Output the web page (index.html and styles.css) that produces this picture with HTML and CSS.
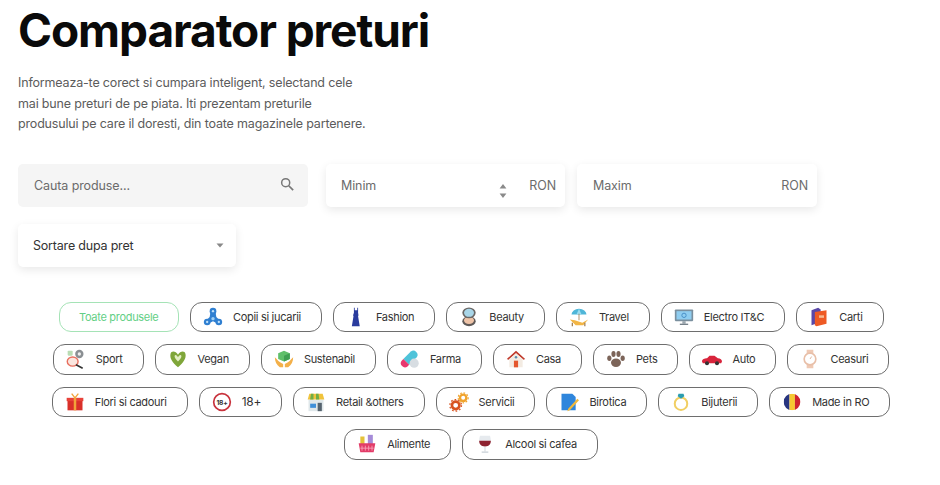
FILE: index.html
```html
<!DOCTYPE html>
<html lang="ro">
<head>
<meta charset="utf-8">
<title>Comparator preturi</title>
<link rel="stylesheet" href="styles.css">
</head>
<body>
<main class="page">
  <h1 class="title">Comparator preturi</h1>
  <p class="intro">Informeaza-te corect si cumpara inteligent, selectand cele<br>mai bune preturi de pe piata. Iti prezentam preturile<br>produsului pe care il doresti, din toate magazinele partenere.</p>

  <section class="filters">
    <div class="field field-search">
      <span class="ph">Cauta produse...</span>
      <svg class="search-ico" viewBox="0 0 16 16" width="14" height="14"><circle cx="6.500" cy="6.500" r="4.600" fill="none" stroke="#777" stroke-width="1.700"/><path d="M10 10l5 5" stroke="#777" stroke-width="2"/></svg>
    </div>
    <div class="field field-min">
      <span class="ph">Minim</span>
      <span class="right-group">
        <svg class="spin" viewBox="0 0 8 14" width="8" height="14"><path d="M4 0l3.400 4.500H.6z M4 14L.6 9.500h6.800z" fill="#8a8a8a"/></svg>
        <span class="ph">RON</span>
      </span>
    </div>
    <div class="field field-max">
      <span class="ph">Maxim</span>
      <span class="ph">RON</span>
    </div>
    <div class="field field-sort">
      <span class="sort-label">Sortare dupa pret</span>
      <svg viewBox="0 0 8 5" width="8" height="5"><path d="M.5.5h7L4 4.500z" fill="#888"/></svg>
    </div>
  </section>

  <section class="pills">
    <a class="pill pill-active">Toate produsele</a>
    <a class="pill"><svg class="ico" viewBox="0 0 24 24"><circle cx="12" cy="5" r="4" fill="#2f7fd1"/><circle cx="5" cy="18" r="4" fill="#2f7fd1"/><circle cx="19" cy="18" r="4" fill="#2f7fd1"/><path d="M9 6h6l1 6 4 4-2 4-6-3-6 3-2-4 4-4z" fill="#2f7fd1"/><circle cx="12" cy="14" r="2" fill="#9fd0f5"/><circle cx="12" cy="5" r="1.400" fill="#bfe0fa"/><circle cx="5" cy="18" r="1.400" fill="#bfe0fa"/><circle cx="19" cy="18" r="1.400" fill="#bfe0fa"/></svg>Copii si jucarii</a>
    <a class="pill"><svg class="ico" viewBox="0 0 24 24"><path d="M9.500 1h1v3h3V1h1v6l.5 3-.5 1 2 12H7l2-12-.5-1 1-3z" fill="#2a3c9e"/></svg>Fashion</a>
    <a class="pill"><svg class="ico" viewBox="0 0 24 24"><ellipse cx="12" cy="17" rx="8" ry="6" fill="#5f5a58"/><ellipse cx="12" cy="16" rx="6" ry="4.400" fill="#efc4a8"/><ellipse cx="12" cy="7" rx="8" ry="6.500" fill="#6b6765"/><ellipse cx="12" cy="7" rx="6" ry="4.800" fill="#a9d6e8"/></svg>Beauty</a>
    <a class="pill"><svg class="ico" viewBox="0 0 24 24"><path d="M3 9a9 7 0 0 1 18 0z" fill="#4fb6d8"/><path d="M9 9l3-7 3 7z" fill="#9adcf0"/><path d="M11.500 8h1v8h-1z" fill="#a07d52"/><path d="M1 15l6 1 9 3 7-4-6 7H8z" fill="#f2b544"/><path d="M4 19v4M19 19v4" stroke="#a07d52" stroke-width="1.500"/></svg>Travel</a>
    <a class="pill"><svg class="ico" viewBox="0 0 24 24"><rect x="1" y="3" width="22" height="14" rx="1" fill="#7a8f9e"/><rect x="3" y="5" width="18" height="10" fill="#8fcdf0"/><circle cx="12" cy="10" r="2.600" fill="none" stroke="#3c86c0" stroke-width="1"/><rect x="10" y="17" width="4" height="3" fill="#9aa6ae"/><rect x="7" y="20" width="10" height="1.500" fill="#6b7780"/></svg>Electro IT&amp;C</a>
    <a class="pill"><svg class="ico" viewBox="0 0 24 24"><path d="M3 4l8-3 3 2v3H8v14l-5 2z" fill="#5a48a8"/><path d="M7 6l14-2v16L9 23l-2-1z" fill="#ee5a24"/><rect x="12" y="10" width="6" height="3" fill="#f7b98f"/></svg>Carti</a>

    <a class="pill"><svg class="ico" viewBox="0 0 24 24"><circle cx="16" cy="6" r="5" fill="#8a8f93"/><circle cx="16" cy="6" r="2" fill="#eee"/><rect x="2" y="2" width="6" height="6" rx="1" fill="#b9dcb4"/><ellipse cx="8" cy="15" rx="6.500" ry="5.500" fill="#fbe6df" stroke="#e8705f" stroke-width="1.700"/><path d="M12 19l8 4" stroke="#333" stroke-width="2"/></svg>Sport</a>
    <a class="pill"><svg class="ico" viewBox="0 0 24 24"><path d="M12 22C5 16 2 11 3 6c1-4 6-4 9 1 3-5 8-5 9-1 1 5-2 10-9 16z" fill="#7fa63a"/><path d="M12 15C9 12 7.500 10 8 8c.5-1.500 2.500-1 4 2 1.500-3 3.500-3.500 4-2 .5 2-1 4-4 7z" fill="#e3efc4"/></svg>Vegan</a>
    <a class="pill"><svg class="ico" viewBox="0 0 24 24"><path d="M12 2l7 3v7l-7 3-7-3V5z" fill="#5fbf6a"/><path d="M12 8l7-3v7l-7 3z" fill="#3f9f52"/><path d="M1 10c3 3 5 6 10 8v4H7C3 19 1 15 1 10z" fill="#f3b04a"/><path d="M23 10c-3 3-5 6-10 8v4h4c4-3 6-7 6-12z" fill="#f3b04a"/></svg>Sustenabil</a>
    <a class="pill"><svg class="ico" viewBox="0 0 24 24"><path d="M4 12L13 3a5 5 0 0 1 7 7l-9 9z" fill="#4fc3d9"/><path d="M4 12l7 7-2 2a5 5 0 0 1-7-7z" fill="#e8386f"/><circle cx="17" cy="17" r="5.500" fill="#d7dde2"/></svg>Farma</a>
    <a class="pill"><svg class="ico" viewBox="0 0 24 24"><path d="M12 2L1 12l2 1 9-8 9 8 2-1z" fill="#c0392b"/><path d="M4 12l8-7 8 7v10H4z" fill="#f3ebe2"/><rect x="9.500" y="14" width="5" height="8" fill="#e4572e"/><circle cx="12" cy="10" r="1.500" fill="#5a8fb0"/></svg>Casa</a>
    <a class="pill"><svg class="ico" viewBox="0 0 24 24" fill="#7c6459"><ellipse cx="12" cy="16.500" rx="6" ry="5"/><ellipse cx="4" cy="11" rx="2.500" ry="3.300"/><ellipse cx="9" cy="6" rx="2.500" ry="3.500"/><ellipse cx="15" cy="6" rx="2.500" ry="3.500"/><ellipse cx="20" cy="11" rx="2.500" ry="3.300"/></svg>Pets</a>
    <a class="pill"><svg class="ico" viewBox="0 0 24 24"><path d="M0 15c0-3 3-4 6-4l3-3h6l4 3c3 0 5 2 5 4l-1 2H1z" fill="#d8243c"/><circle cx="6" cy="17" r="2.400" fill="#333"/><circle cx="18" cy="17" r="2.400" fill="#333"/></svg>Auto</a>
    <a class="pill"><svg class="ico" viewBox="0 0 24 24"><path d="M8 1h8v5H8zM8 18h8v5H8z" fill="#efc9b4"/><circle cx="12" cy="12" r="7" fill="#fff" stroke="#e8bfa8" stroke-width="2"/><path d="M12 12l2-3" stroke="#d9a88e"/></svg>Ceasuri</a>

    <a class="pill"><svg class="ico" viewBox="0 0 24 24"><rect x="3" y="8" width="18" height="14" fill="#d9302a"/><rect x="2" y="7" width="20" height="4" fill="#e8423a"/><rect x="10.500" y="7" width="3" height="15" fill="#f2a33a"/><path d="M12 7L8 2M12 7l4-5" stroke="#f2a33a" stroke-width="1.600"/></svg>Flori si cadouri</a>
    <a class="pill pill-age"><svg class="ico" viewBox="0 0 24 24"><circle cx="12" cy="12" r="10" fill="#fff" stroke="#c8323c" stroke-width="2"/><text class="age-mark" x="12" y="15" text-anchor="middle">18+</text></svg>18+</a>
    <a class="pill"><svg class="ico" viewBox="0 0 24 24"><rect x="3" y="9" width="18" height="14" fill="#dfe7ea"/><rect x="5" y="14" width="7" height="5" fill="#3f8fd8"/><rect x="14" y="13" width="5" height="10" fill="#55636e"/><path d="M4 2h16l2 7H2z" fill="#f0c33c"/><path d="M6 2h3v7H5zM12 2h3l1 7h-4z" fill="#6fae46"/></svg>Retail &amp;others</a>
    <a class="pill"><svg class="ico" viewBox="0 0 24 24"><circle cx="8" cy="16" r="4.500" fill="none" stroke="#d8531f" stroke-width="3.200"/><circle cx="8" cy="16" r="7" fill="none" stroke="#d8531f" stroke-width="1.500" stroke-dasharray="2 2.400"/><circle cx="17" cy="7" r="3.800" fill="none" stroke="#f0a32c" stroke-width="2.800"/><circle cx="17" cy="7" r="6" fill="none" stroke="#f0a32c" stroke-width="1.400" stroke-dasharray="2 2"/></svg>Servicii</a>
    <a class="pill"><svg class="ico" viewBox="0 0 24 24"><path d="M3 2h13l4 4v16H3z" fill="#2f86dc"/><path d="M22 8l2 2-11 12-3 1 1-3z" fill="#f1b93c"/></svg>Birotica</a>
    <a class="pill"><svg class="ico" viewBox="0 0 24 24"><circle cx="12" cy="14" r="7.500" fill="none" stroke="#f1cf63" stroke-width="2.400"/><path d="M9 2h6l1 3-4 3-4-3z" fill="#2b9db0"/></svg>Bijuterii</a>
    <a class="pill"><svg class="ico" viewBox="0 0 24 24"><defs><clipPath id="flag"><circle cx="12" cy="12" r="10"/></clipPath></defs><g clip-path="url(#flag)"><rect x="2" y="2" width="7" height="20" fill="#27357f"/><rect x="9" y="2" width="6.500" height="20" fill="#f6c832"/><rect x="15.500" y="2" width="7" height="20" fill="#cf2430"/></g></svg>Made in RO</a>

    <a class="pill"><svg class="ico" viewBox="0 0 24 24"><rect x="4" y="3" width="5" height="9" fill="#e5c23a"/><rect x="13" y="1" width="6" height="11" fill="#a58bd8"/><path d="M2 11h20l-2 11H4z" fill="#e23c68"/><path d="M6 14v6M10 14v6M14 14v6M18 14v6M4 17h16" stroke="#f9a6bd" stroke-width="1"/></svg>Alimente</a>
    <a class="pill"><svg class="ico" viewBox="0 0 24 24"><path d="M6 2h12c2 7 1 12-6 13C5 14 4 9 6 2z" fill="#e6eaee"/><path d="M5 8h14c0 4-2 6.500-7 7-5-.5-7-3-7-7z" fill="#8e2230"/><path d="M11.500 15h1v6h-1z" fill="#c8d0d6"/><rect x="8" y="21" width="8" height="1.500" fill="#c8d0d6"/></svg>Alcool si cafea</a>
  </section>
</main>
</body>
</html>
```
FILE: styles.css
```css
* { box-sizing: border-box; }
html, body { margin: 0; background: #fff; }
body { font-family: Inter, "Liberation Sans", sans-serif; color: #333; overflow: hidden; }
.page { width: 940px; height: 485px; padding: 2px 0 0 18px; }
.title { margin: 0; font-size: 46px; line-height: 56px; font-weight: 700; letter-spacing: -1.07px; color: #0a0a0a; }
.intro { margin: 15px 0 0; font-size: 12.5px; line-height: 20.5px; letter-spacing: -0.17px; color: #5c5c5c; }

.filters { display: flex; flex-wrap: wrap; width: 800px; margin-top: 29px; row-gap: 17px; }
.field { display: flex; align-items: center; justify-content: space-between; height: 43px; border-radius: 5px; background: #fff; box-shadow: 0 3px 10px rgba(0,0,0,.09); font-size: 12.5px; letter-spacing: -0.1px; }
.ph { color: #6b6b6b; }
.field-search { width: 290px; margin-right: 18px; padding: 0 14px 0 16px; background: #f5f5f5; box-shadow: none; }
.field-min { width: 239px; margin-right: 12px; padding: 0 9px 0 15px; }
.field-max { width: 240px; padding: 0 9px 0 16px; }
.field-sort { width: 218px; padding: 0 12px 0 15px; }
.sort-label { color: #333; letter-spacing: -0.2px; }
.right-group { display: flex; align-items: center; gap: 22px; }
.spin { margin-top: 11px; }
.search-ico { margin-top: -2px; }

.pills { display: flex; flex-wrap: wrap; justify-content: center; gap: 12px 11px; width: 906px; margin-top: 35px; }
.pill { display: flex; align-items: center; gap: 10px; height: 30.5px; padding: 0 20px 0 12px; border: 1px solid #6e6e6e; border-radius: 12px; background: #fff; font-size: 11px; letter-spacing: -0.3px; color: #333; white-space: nowrap; }
.pill-active { padding: 0 19.5px; border-color: #a5e3b6; color: #63cf85; }
.pill-age { font-size: 12px; }
.ico { width: 20px; height: 20px; flex: none; }
.age-mark { font-size: 8px; font-weight: 700; fill: #333; }
```
